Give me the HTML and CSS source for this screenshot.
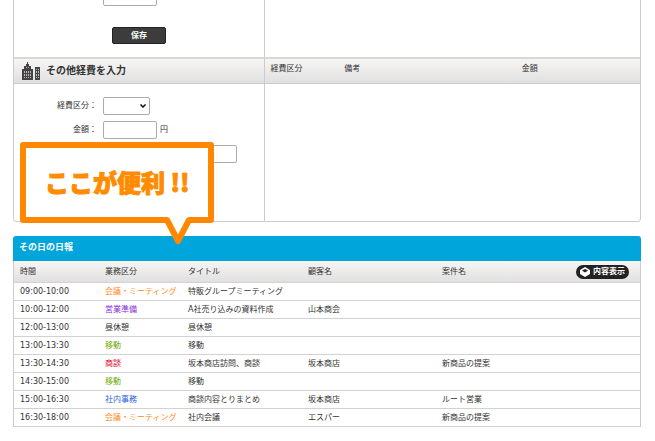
FILE: index.html
```html
<!DOCTYPE html>
<html lang="ja">
<head>
<meta charset="utf-8">
<title>日報</title>
<link rel="stylesheet" href="styles.css">
</head>
<body>

<div class="panel">
	<form class="save">
		<input type="text" class="short" aria-label="金額">
		<button type="button" class="saveBtn">保存</button>
	</form>
	<div class="list"></div>

	<div class="head title">
		<svg class="building" viewBox="0 0 18 18" width="18" height="18">
			<path fill="#444" d="M0 18V7h2V4h2V2h1V0h1v2h1v2h2v3h2v11zM13 5h5v13h-5z"/>
			<path fill="#bbb" d="M4 5h1v1H4zM6 5h1v1H6zM2 9h1v2H2zM4 9h1v2H4zM6 9h1v2H6zM8 9h1v2H8zM2 12h1v2H2zM4 12h1v2H4zM6 12h1v2H6zM8 12h1v2H8zM2 15h1v1H2zM4 15h1v1H4zM6 15h1v1H6zM8 15h1v1H8zM14 7h1v1h-1zM16 7h1v1h-1zM14 9h1v2h-1zM16 9h1v2h-1zM14 12h1v2h-1zM16 12h1v2h-1zM14 15h1v1h-1zM16 15h1v1h-1z"/>
		</svg>
		<h2>その他経費を入力</h2>
	</div>
	<div class="head cols">
		<span>経費区分</span>
		<span>備考</span>
		<span>金額</span>
	</div>

	<form class="expense">
		<label for="kind">経費区分：</label>
		<div class="field">
			<select id="kind"><option></option></select>
			<svg class="arrow" viewBox="0 0 6 4" width="6" height="4"><path d="M0.5 0.5L3 3L5.5 0.5" fill="none" stroke="#111" stroke-width="1.5"/></svg>
		</div>
		<label for="price">金額：</label>
		<div class="field"><input type="text" id="price" class="short"><span>円</span></div>
		<div class="field last"><input type="text" class="long" aria-label="備考"></div>
	</form>
	<div class="list"></div>

	<div class="callout">
		<svg viewBox="0 0 194 103" width="194" height="103">
			<path d="M3 3H191V78H169L158 99L147 78H3Z" fill="#fff" stroke="#ff8800" stroke-width="6" stroke-linejoin="round"/>
		</svg>
		<p>ここが便利 !!</p>
	</div>
</div>

<div class="report">
	<h2>その日の日報</h2>
	<table>
		<thead>
			<tr>
				<th class="time">時間</th>
				<th class="kind">業務区分</th>
				<th class="subject">タイトル</th>
				<th class="client">顧客名</th>
				<th class="project">案件名</th>
				<th class="tool">
					<button type="button" class="showBtn">
						<svg viewBox="0 0 10 10" width="10" height="10">
							<path fill="#fff" d="M5 0L10 3V7L5 10L0 7V3z"/>
							<path fill="#222" d="M5 2L8 3.5L5 5.500L2 3.5z"/>
						</svg>
						内容表示
					</button>
				</th>
			</tr>
		</thead>
		<tbody>
			<tr><td>09:00-10:00</td><td class="meeting">会議・ミーティング</td><td>特販グループミーティング</td><td></td><td></td><td></td></tr>
			<tr><td>10:00-12:00</td><td class="prepare">営業準備</td><td>A社売り込みの資料作成</td><td>山本商会</td><td></td><td></td></tr>
			<tr><td>12:00-13:00</td><td>昼休憩</td><td>昼休憩</td><td></td><td></td><td></td></tr>
			<tr><td>13:00-13:30</td><td class="move">移動</td><td>移動</td><td></td><td></td><td></td></tr>
			<tr><td>13:30-14:30</td><td class="talk">商談</td><td>坂本商店訪問、商談</td><td>坂本商店</td><td>新商品の提案</td><td></td></tr>
			<tr><td>14:30-15:00</td><td class="move">移動</td><td>移動</td><td></td><td></td><td></td></tr>
			<tr><td>15:00-16:30</td><td class="office">社内事務</td><td>商談内容とりまとめ</td><td>坂本商店</td><td>ルート営業</td><td></td></tr>
			<tr><td>16:30-18:00</td><td class="meeting">会議・ミーティング</td><td>社内会議</td><td>エスパー</td><td>新商品の提案</td><td></td></tr>
		</tbody>
	</table>
</div>

</body>
</html>
```
FILE: styles.css
```css
@charset "utf-8";

*{
	box-sizing:border-box;
}

body{
	margin:0 14px 0 13px;
	background-color:#fff;
	color:#333;
	font-family:"DejaVu Sans","Noto Sans CJK JP",sans-serif;
	font-size:8px;
	line-height:12px;
	overflow:hidden;
}

h2, p{
	margin:0;
}

input, select, button{
	margin:0;
	font-family:inherit;
	font-size:8px;
}

input, select{
	height:18px;
	padding:0 4px;
	border:1px solid #aaa;
	border-radius:2px;
	background-color:#fff;
}

/* expense panel */
.panel{
	position:relative;
	display:grid;
	grid-template-columns:2fr 3fr;
	margin-top:-13px;
	border:1px solid #ccc;
	border-radius:3px;
}

.list{
	border-left:1px solid #ccc;
}

.save{
	display:flex;
	flex-direction:column;
	align-items:flex-start;
	padding-bottom:13px;
	padding-left:89px;
}

.saveBtn{
	width:54px;
	height:17px;
	margin:21px 0 0 9px;
	padding:0;
	border:1px solid #222;
	border-radius:2px;
	background-color:#3c3c3c;
	color:#fff;
	font-weight:bold;
	line-height:12px;
}

.short{
	width:54px;
}

.long{
	width:134px;
}

.head{
	display:flex;
	align-items:center;
	height:27px;
	border-top:2px solid #d8d8d8;
	border-bottom:1px solid #ccc;
	background-image:linear-gradient(#f7f6f5,#e1e0e0);
}

.title{
	gap:6px;
	padding-left:8px;
}

.title h2{
	font-size:10px;
	font-weight:bold;
	line-height:16px;
}

.cols{
	display:grid;
	grid-template-columns:20% 48% 1fr;
	padding:0 0 4px 5px;
	border-left:1px solid #ccc;
}

.expense{
	display:grid;
	grid-template-columns:83px 1fr;
	grid-auto-rows:18px;
	gap:6px;
	align-items:center;
	align-content:start;
	height:137px;
	padding-top:13px;
}

.expense label{
	text-align:right;
}

.field{
	display:flex;
	align-items:center;
	gap:3px;
}

.last{
	grid-column:2;
}

select{
	width:47px;
	appearance:none;
}

.arrow{
	margin-left:-13px;
	pointer-events:none;
}

.callout{
	position:absolute;
	left:6px;
	top:154px;
}

.callout svg{
	display:block;
}

.callout p{
	position:absolute;
	top:22px;
	left:25px;
	color:#ff8c00;
	font-family:"Noto Sans CJK JP",sans-serif;
	font-size:24px;
	font-weight:900;
	line-height:36px;
	white-space:nowrap;
	-webkit-text-stroke:1px #ff8c00;
}

/* daily report */
.report{
	margin-top:14px;
}

.report h2{
	padding:3px 6px 6px;
	border-radius:3px 3px 0 0;
	background-color:#00a5dc;
	color:#fff;
	font-size:9px;
	line-height:16px;
}

table{
	width:100%;
	border-collapse:separate;
	border-spacing:0;
	border:1px solid #ccc;
	border-width:0 1px;
	table-layout:fixed;
}

th, td{
	height:18px;
	padding:0 0 0 6px;
	border-bottom:1px solid #d2d2d2;
	font-weight:normal;
	text-align:left;
	white-space:nowrap;
}

th{
	height:22px;
	background-image:linear-gradient(#f7f6f5,#e1e0e0);
	background-color:#eee;
}

.time{
	width:85px;
}

.kind{
	width:83px;
}

.subject{
	width:120px;
}

.client{
	width:134px;
}

.tool{
	width:76px;
	padding-right:11px;
}

.showBtn{
	display:flex;
	align-items:center;
	gap:3px;
	height:14px;
	margin-left:auto;
	padding:0 4px;
	border:0;
	border-radius:7px;
	background-color:#222;
	color:#fff;
	font-weight:bold;
	line-height:12px;
}

.meeting{
	color:#ff8c1a;
}

.prepare{
	color:#8a2be2;
}

.move{
	color:#6aaa00;
}

.talk{
	color:#e6002d;
}

.office{
	color:#1f5fe0;
}
```
